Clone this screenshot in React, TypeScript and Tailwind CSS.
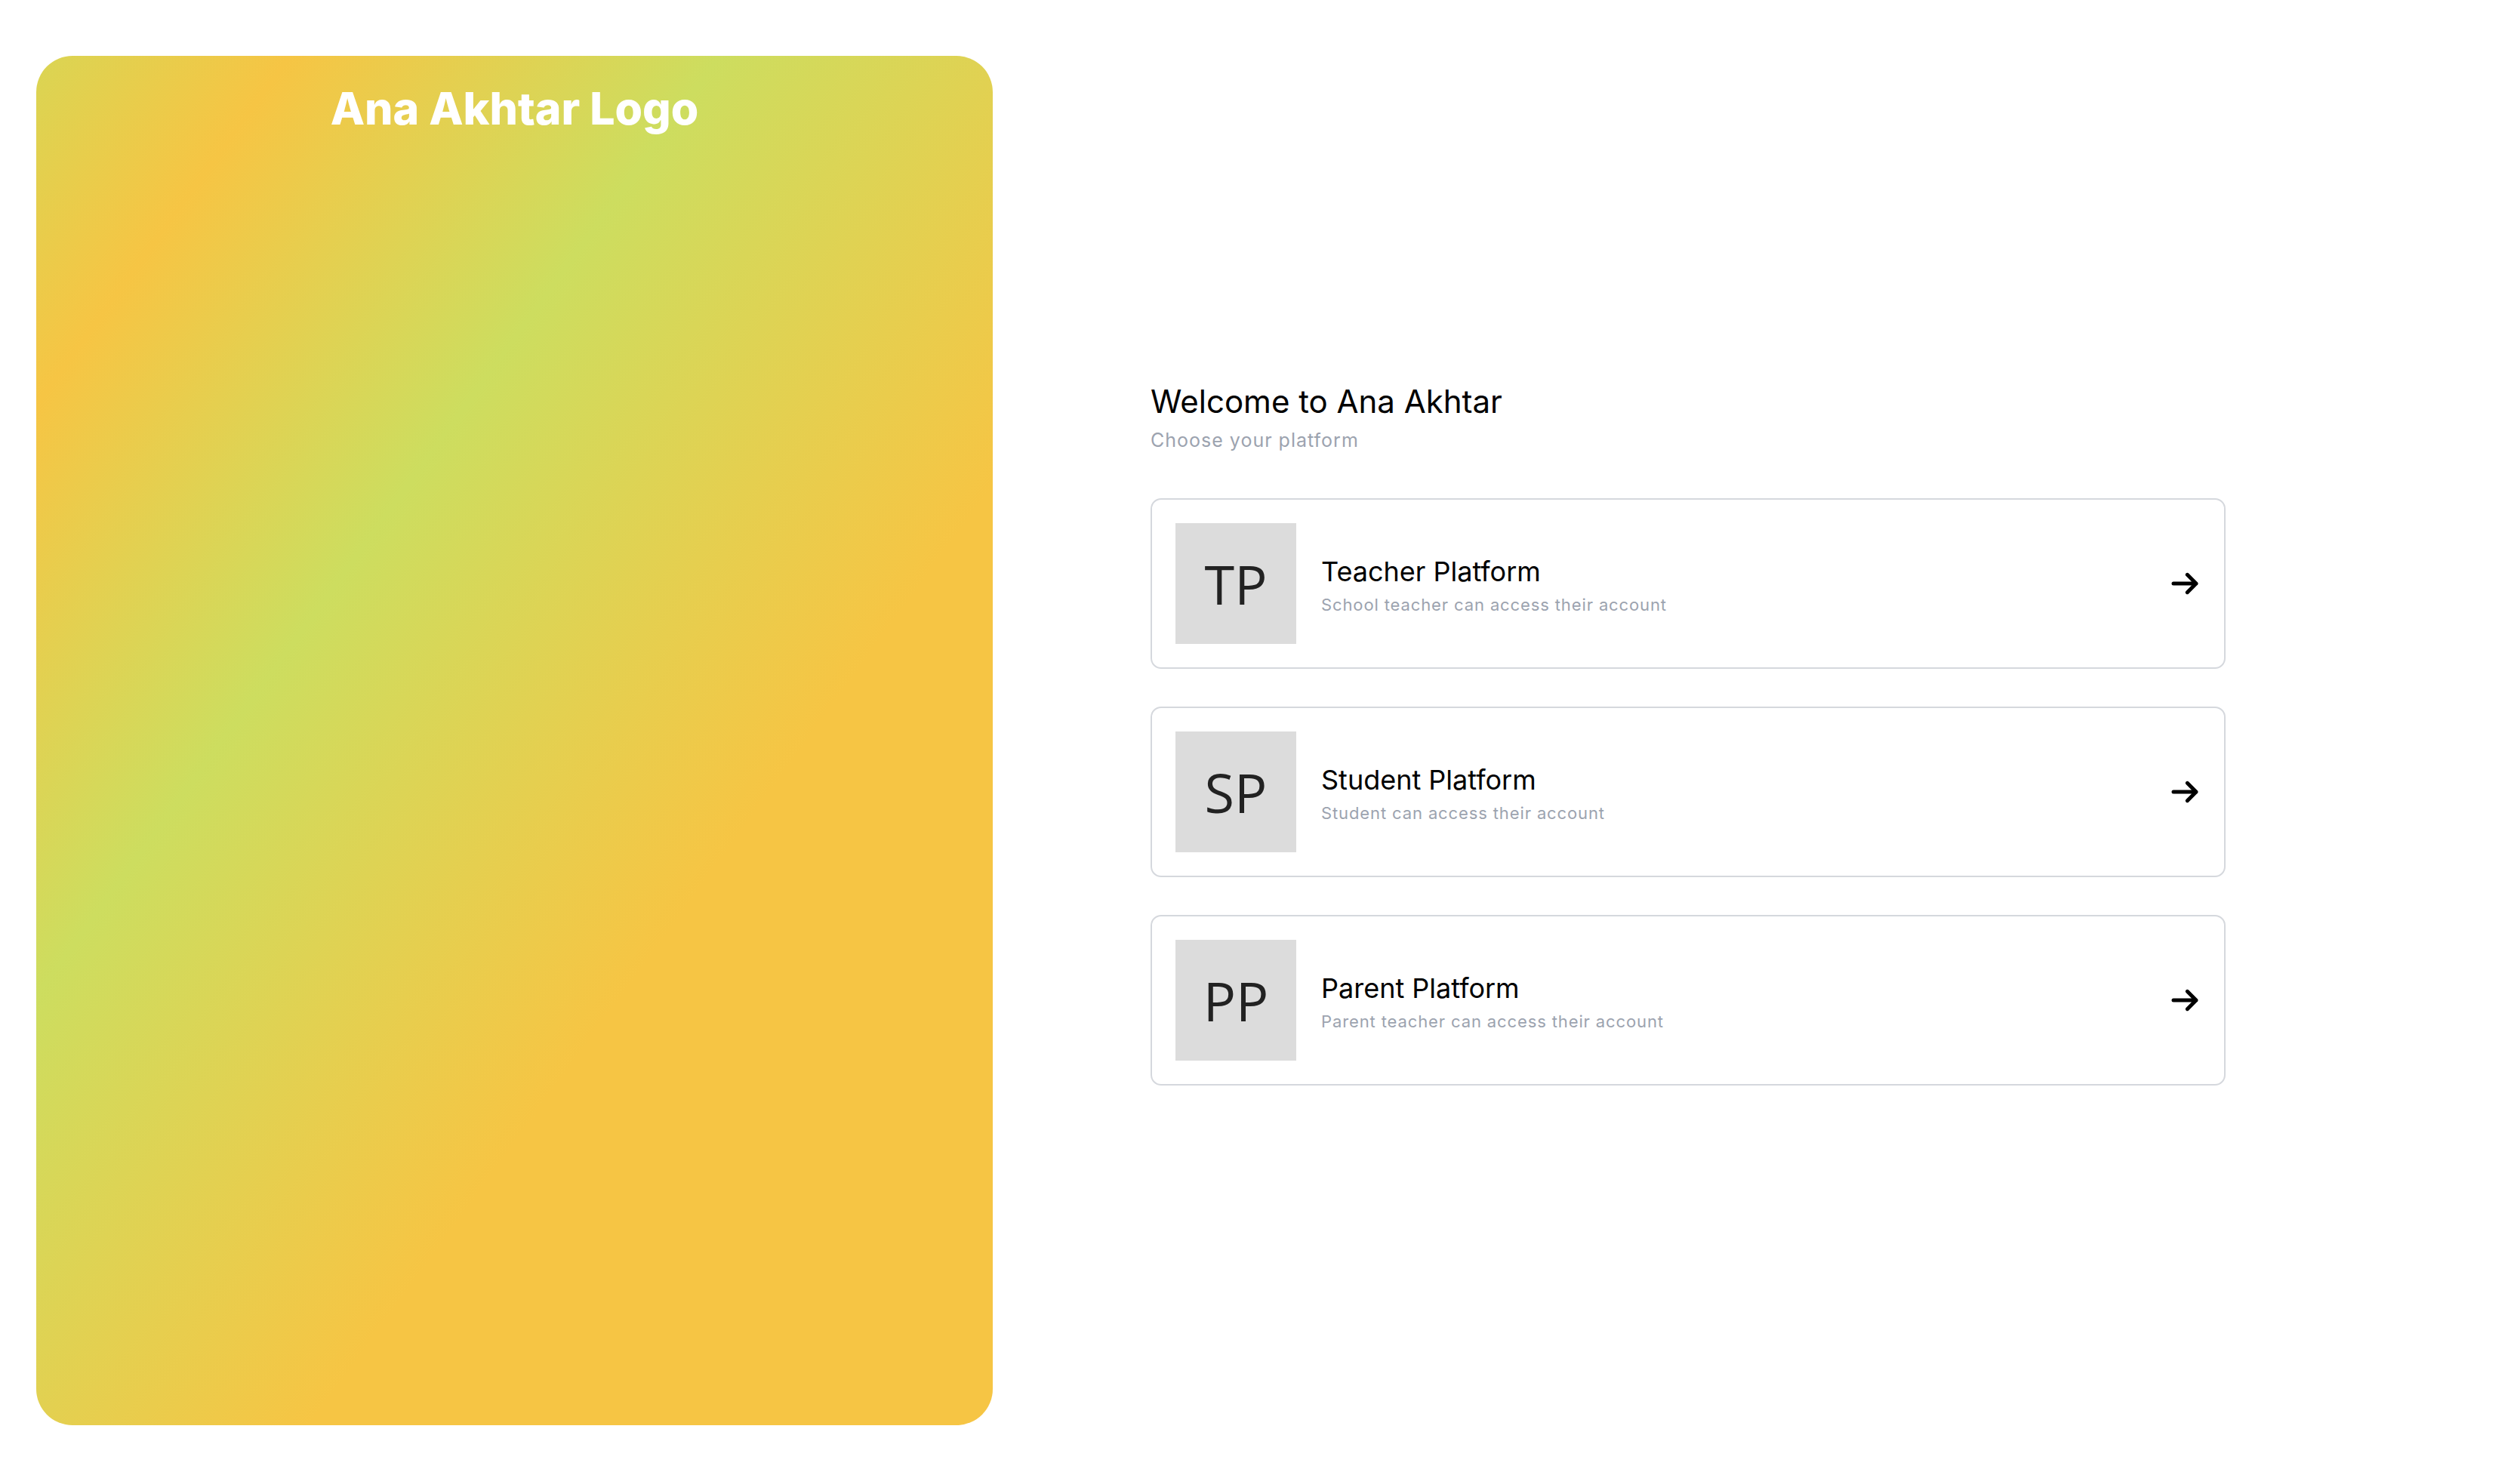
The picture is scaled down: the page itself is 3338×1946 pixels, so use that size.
import React from 'react';

type Platform = {
    initials: string;
    title: string;
    description: string;
};

const platforms: Platform[] = [
    { initials: 'TP', title: 'Teacher Platform', description: 'School teacher can access their account' },
    { initials: 'SP', title: 'Student Platform', description: 'Student can access their account' },
    { initials: 'PP', title: 'Parent Platform', description: 'Parent teacher can access their account' },
];

function ArrowIcon() {
    return (
        <svg
            viewBox="0 0 24 24"
            className="w-[40px] h-[40px] shrink-0 text-black"
            fill="none"
            stroke="currentColor"
            strokeWidth={3}
            strokeLinecap="round"
            strokeLinejoin="round"
        >
            <path d="M14 5l7 7m0 0l-7 7m7-7H3" />
        </svg>
    );
}

function PlatformCard({ initials, title, description }: Platform) {
    return (
        <div className="h-[226px] border-2 border-[#d5d8dd] rounded-[14px] bg-white p-[31px] pr-[32px] flex items-center cursor-pointer hover:shadow-md transition-shadow">
            <div className="w-[160px] h-[160px] shrink-0 bg-[#dcdcdc] flex items-center justify-center">
                <span className="font-['Open_Sans',sans-serif] text-[72px] leading-none text-[#222222]">{initials}</span>
            </div>
            <div className="flex-1 ml-[33px] pt-[3px] flex flex-col">
                <span className="text-[36px] leading-[1.2] text-black">{title}</span>
                <span className="mt-[9px] text-[22px] leading-[1.2] tracking-[0.04em] text-[#9ca3af]">{description}</span>
            </div>
            <ArrowIcon />
        </div>
    );
}

export default function App() {
    return (
        <div className="w-full h-[1946px] bg-white flex font-['Inter','Liberation_Sans',sans-serif]">
            {/* brand panel */}
            <div className="ml-[48px] mt-[74px] w-[1267px] h-[1814px] shrink-0 rounded-[48px] bg-[linear-gradient(126deg,#dad553_0%,#f6c544_13%,#cddd5f_35%,#f6c544_65%,#f6c544_100%)] flex flex-col items-center pt-[35px]">
                <h1 className="text-[59px] leading-[1.2] font-extrabold text-white">Ana Akhtar Logo</h1>
            </div>

            {/* platform chooser */}
            <div className="pl-[209px] pt-[507px]">
                <div className="w-[1424px] flex flex-col">
                    <h2 className="text-[42px] leading-[1.2] font-normal text-black">Welcome to Ana Akhtar</h2>
                    <p className="mt-[11px] text-[25px] leading-[1.2] tracking-[0.04em] text-[#9ca3af]">Choose your platform</p>

                    <div className="mt-[62px] flex flex-col gap-[50px]">
                        {platforms.map((p) => (
                            <PlatformCard key={p.initials} {...p} />
                        ))}
                    </div>
                </div>
            </div>
        </div>
    );
}
